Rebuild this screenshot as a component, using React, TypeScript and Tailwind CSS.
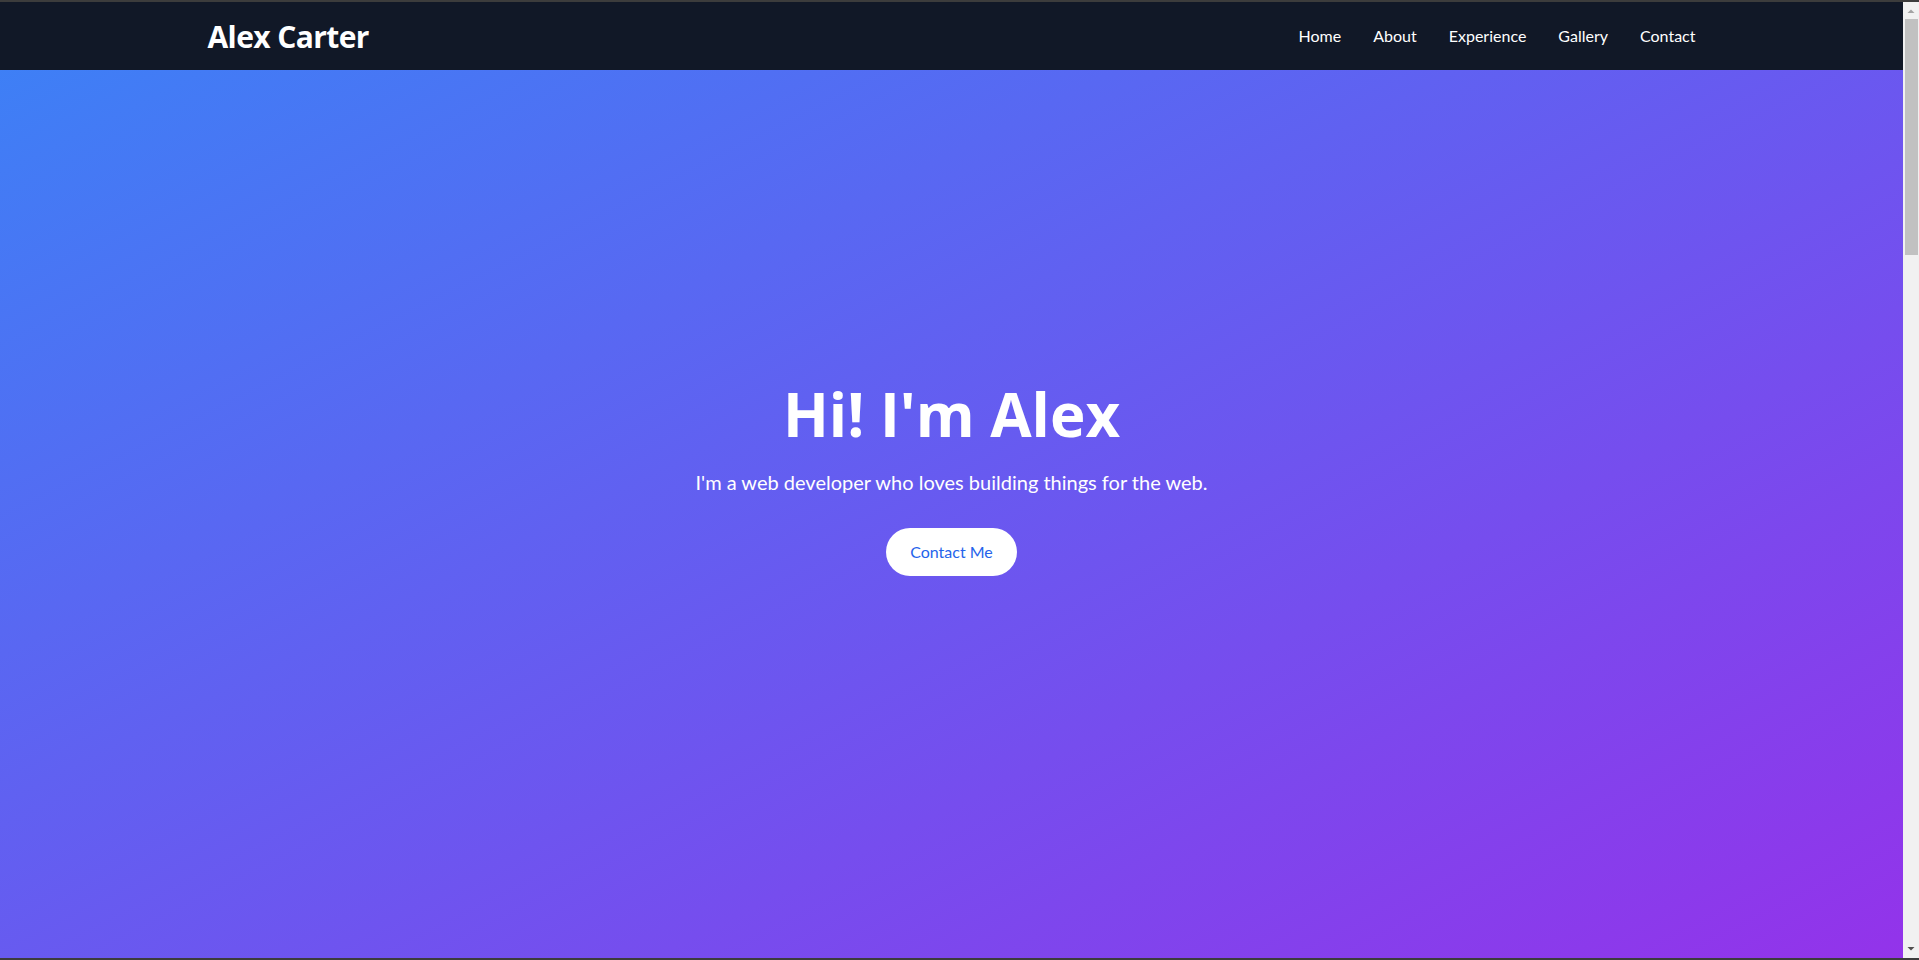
const links = ['Home', 'About', 'Experience', 'Gallery', 'Contact'];

function FakeScrollbar(): JSX.Element {
    return (
        <div className="w-4 shrink-0 bg-[#f1f1f1] flex flex-col items-center">
            <svg width="16" height="17" viewBox="0 0 16 17" className="shrink-0">
                <path d="M4.5 11 L8 7.5 L11.5 11 Z" fill="#a3a3a3" />
            </svg>
            <div className="w-[13px] ml-px h-[236px] bg-[#c1c1c1]" />
            <div className="flex-1" />
            <svg width="16" height="17" viewBox="0 0 16 17" className="shrink-0">
                <path d="M4.5 6 L8 9.5 L11.5 6 Z" fill="#505050" />
            </svg>
        </div>
    );
}

export default function App(): JSX.Element {
    return (
        <div className="h-screen flex flex-col border-y-2 border-[#3c3c3c] font-['Lato',sans-serif]">
            <div className="flex-1 min-h-0 flex">
                <main className="flex-1 min-w-0 flex flex-col">
                    {/* Header (fixed over the hero) */}
                    <header className="relative z-10 h-[68px] shrink-0 bg-[#111827] text-white">
                        <div className="mx-auto max-w-[1536px] px-6 h-full flex items-center justify-between">
                            <a
                                href="#home"
                                className="font-['Open_Sans',sans-serif] text-[30px] font-bold tracking-[-0.02em]"
                            >
                                Alex Carter
                            </a>
                            <nav className="flex items-center gap-8 text-base">
                                {links.map((link) => (
                                    <a key={link} href={`#${link.toLowerCase()}`} className="text-white hover:text-gray-300">
                                        {link}
                                    </a>
                                ))}
                            </nav>
                        </div>
                    </header>

                    {/* Hero fills the whole viewport, behind the header */}
                    <section
                        id="home"
                        className="flex-1 -mt-[68px] bg-[linear-gradient(to_bottom_right,#3b82f6,#9333ea)] text-white"
                    >
                        <div className="mx-auto max-w-[1536px] px-6 h-full flex flex-col items-center justify-center text-center">
                            <h1 className="font-['Open_Sans',sans-serif] text-6xl font-bold">Hi! I'm Alex</h1>
                            <p className="mt-6 text-xl">I'm a web developer who loves building things for the web.</p>
                            <a href="#contact" className="mt-8 px-6 py-3 rounded-full bg-white text-[#2563eb]">
                                Contact Me
                            </a>
                        </div>
                    </section>
                </main>
                <FakeScrollbar />
            </div>
        </div>
    );
}
